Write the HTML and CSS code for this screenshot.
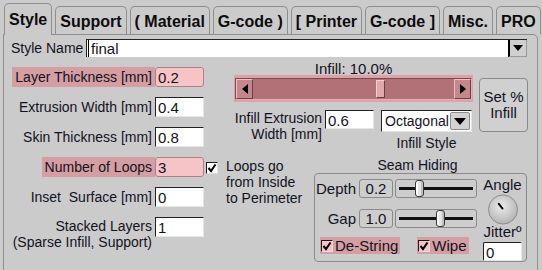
FILE: index.html
```html
<!DOCTYPE html>
<html lang="en">
<head>
    <meta charset="UTF-8">
    <link rel="stylesheet" href="styles.css">
</head>
<body>
    <div class="tabs">
        <div class="tab active">Style</div>
        <div class="tab">Support</div>
        <div class="tab">( Material</div>
        <div class="tab">G-code )</div>
        <div class="tab">[ Printer</div>
        <div class="tab">G-code ]</div>
        <div class="tab">Misc.</div>
        <div class="tab">PRO</div>
    </div>

    <div class="panel">
        <div class="name-row">
            <span class="name-label">Style Name</span>
            <div class="combo">
                <span class="combo-text">final</span>
                <span class="combo-btn"><svg width="10" height="6" viewBox="0 0 10 6"><path d="M0 0h10L5 6z" fill="#000"/></svg></span>
            </div>
        </div>

        <div class="main">
            <div class="fields">
                <div class="field">
                    <span class="lbl hl">Layer Thickness [mm]</span>
                    <span class="box pink">0.2</span>
                </div>
                <div class="field">
                    <span class="lbl">Extrusion Width [mm]</span>
                    <span class="box">0.4</span>
                </div>
                <div class="field">
                    <span class="lbl">Skin Thickness [mm]</span>
                    <span class="box">0.8</span>
                </div>
                <div class="field">
                    <span class="lbl hl">Number of Loops</span>
                    <span class="box pink">3</span>
                </div>
                <div class="field">
                    <span class="lbl">Inset&nbsp; Surface [mm]</span>
                    <span class="box">0</span>
                </div>
                <div class="field two-line">
                    <span class="lbl">Stacked Layers<br>(Sparse Infill, Support)</span>
                    <span class="box">1</span>
                </div>
            </div>

            <div class="right">
                <div class="infill-area">
                    <div class="infill">
                        <div class="infill-title">Infill: 10.0%</div>
                        <div class="scroll-wrap">
                            <div class="scroll">
                                <span class="arrow-btn"><svg width="6" height="10" viewBox="0 0 6 10"><path d="M6 0v10L0 5z" fill="#000"/></svg></span>
                                <span class="track" style="width: 123px"></span>
                                <span class="thumb"></span>
                                <span class="track fill"></span>
                                <span class="arrow-btn"><svg width="6" height="10" viewBox="0 0 6 10"><path d="M0 0v10l6-5z" fill="#000"/></svg></span>
                            </div>
                        </div>
                        <div class="infill-row">
                            <span class="infill-lbl">Infill Extrusion<br>Width [mm]</span>
                            <span class="box">0.6</span>
                            <div class="style-pick">
                                <div class="drop">
                                    <span class="drop-text">Octagonal</span>
                                    <span class="drop-btn"><svg width="12" height="7" viewBox="0 0 12 7"><path d="M0 0h12L6 7z" fill="#000"/></svg></span>
                                </div>
                                <div class="drop-caption">Infill Style</div>
                            </div>
                        </div>
                    </div>
                    <div class="set-btn">Set %<br>Infill</div>
                </div>

                <div class="lower">
                    <div class="loops-note">
                        <span class="check"><svg width="10" height="10" viewBox="0 0 10 10"><path d="M1.5 5l2.5 3 4.5-6.5" fill="none" stroke="#000" stroke-width="2"/></svg></span>
                        <span class="note-text">Loops go<br>from Inside<br>to Perimeter</span>
                    </div>

                    <div class="seam">
                        <div class="seam-title">Seam Hiding</div>
                        <div class="seam-box">
                            <div class="seam-left">
                                <div class="seam-row">
                                    <span class="seam-lbl">Depth</span>
                                    <span class="val">0.2</span>
                                    <div class="slider"><div class="slider-track"><span class="knob" style="left: 16px"></span></div></div>
                                </div>
                                <div class="seam-row">
                                    <span class="seam-lbl">Gap</span>
                                    <span class="val">1.0</span>
                                    <div class="slider"><div class="slider-track"><span class="knob" style="left: 37px"></span></div></div>
                                </div>
                                <div class="seam-checks">
                                    <span class="chk-hl"><span class="check pink-check"><svg width="10" height="10" viewBox="0 0 10 10"><path d="M1.5 5l2.5 3 4.5-6.5" fill="none" stroke="#000" stroke-width="2"/></svg></span>De-String</span>
                                    <span class="chk-hl wipe"><span class="check pink-check"><svg width="10" height="10" viewBox="0 0 10 10"><path d="M1.5 5l2.5 3 4.5-6.5" fill="none" stroke="#000" stroke-width="2"/></svg></span>Wipe</span>
                                </div>
                            </div>
                            <div class="seam-right">
                                <span class="angle-lbl">Angle</span>
                                <svg class="dial" width="32" height="32" viewBox="0 0 32 32">
                                    <defs>
                                        <radialGradient id="dialFill" cx="45%" cy="40%" r="60%">
                                            <stop offset="0" stop-color="#ececec"/>
                                            <stop offset="1" stop-color="#b4b4b4"/>
                                        </radialGradient>
                                    </defs>
                                    <circle cx="16" cy="16" r="15" fill="url(#dialFill)" stroke="#8a8a8a"/>
                                    <path d="M11.5 10l4 5" stroke="#000" stroke-width="2" stroke-linecap="round"/>
                                </svg>
                                <span class="jitter-lbl">Jitterº</span>
                                <span class="box jitter">0</span>
                            </div>
                        </div>
                    </div>
                </div>
            </div>
        </div>
    </div>
</body>
</html>
```

FILE: styles.css
```css
body {
    margin: 0;
    width: 542px;
    height: 270px;
    overflow: hidden;
    background: #cbcbcb;
    font-family: "Liberation Sans", Arial, sans-serif;
    font-size: 14px;
    color: #12121e;
}

/* tab strip */
.tabs {
    display: flex;
    align-items: flex-end;
    gap: 3px;
    height: 31px;
    padding: 3px 0 0 4px;
}
.tab {
    height: 27px;
    line-height: 29px;
    padding: 0 4px;
    border: 1px solid #8e8e8e;
    border-bottom: none;
    border-radius: 5px 5px 0 0;
    font-size: 16px;
    font-weight: bold;
    color: #0c0c0c;
}
.tab.active {
    position: relative;
    z-index: 1;
    height: 31px;
    line-height: 31px;
    margin-bottom: -1px;
    background: #cbcbcb;
}

.panel {
    height: 240px;
    margin: 0 4px 0 3px;
    padding-top: 4px;
    border: 1px solid #8e8e8e;
    border-radius: 0 5px 0 0;
    box-sizing: border-box;
}

/* style name */
.name-row {
    display: flex;
    align-items: center;
    height: 18px;
    padding-left: 7px;
}
.name-label {
    width: 75px;
}
.combo {
    display: flex;
    width: 441px;
    height: 18px;
    background: #fff;
    border-top: 1px solid #222;
    border-left: 1px solid #222;
    box-sizing: border-box;
}
.combo-text {
    flex: 1;
    padding-left: 2px;
    line-height: 17px;
    font-size: 15px;
    border-left: 1px solid #000;
    margin-left: 1px;
}
.combo-btn {
    display: flex;
    align-items: center;
    justify-content: center;
    width: 16px;
    background: #cfcfcf;
    border-left: 2px solid #000;
    border-right: 1px solid #9a9a9a;
    border-bottom: 1px solid #9a9a9a;
}

.main {
    display: flex;
    margin-top: 5px;
}

/* left column of fields */
.fields {
    width: 200px;
    padding-top: 5px;
}
.field {
    display: flex;
    justify-content: flex-end;
    align-items: center;
    height: 20px;
    margin-bottom: 10px;
}
.field.two-line {
    align-items: flex-start;
}
.lbl {
    padding: 0 3px;
    line-height: 20px;
    text-align: right;
    white-space: nowrap;
}
.two-line .lbl {
    line-height: 16px;
    padding-top: 1px;
}
.lbl.hl {
    background: #d49ea2;
}
.box {
    width: 49px;
    height: 20px;
    padding-left: 2px;
    line-height: 19px;
    font-size: 15px;
    background: #fff;
    border: 1px solid #e6e6e6;
    border-top-color: #202020;
    border-left-color: #202020;
    box-sizing: border-box;
}
.box.pink {
    background: #f6c3c7;
    border: 1px solid #a88486;
    border-radius: 3px;
}

/* right side */
.right {
    flex: 1;
}
.infill-area {
    display: flex;
    align-items: flex-start;
    height: 96px;
    padding-left: 30px;
}
.infill {
    width: 239px;
}
.infill-title {
    height: 13px;
    line-height: 13px;
    font-size: 15px;
    text-align: center;
}
.scroll-wrap {
    padding: 3px 1px 2px;
    background: #dca2a6;
}
.scroll {
    display: flex;
    height: 20px;
    background: #b07276;
    border: 1px solid;
    border-color: #7c4a4d #e2b1b4 #e2b1b4 #7c4a4d;
}
.arrow-btn {
    display: flex;
    align-items: center;
    justify-content: center;
    width: 15px;
    background: #c4878b;
    border: 1px solid;
    border-color: #edc1c4 #6e3e41 #6e3e41 #edc1c4;
}
.track {
    flex: none;
}
.track.fill {
    flex: 1;
}
.thumb {
    width: 7px;
    margin: 1px 0;
    background: #e1a9ac;
    border: 1px solid;
    border-color: #f5d2d4 #6e3e41 #6e3e41 #f5d2d4;
}
.infill-row {
    display: flex;
    align-items: flex-start;
    margin-top: 8px;
}
.infill-lbl {
    width: 88px;
    line-height: 16px;
    text-align: right;
    white-space: nowrap;
}
.infill-row .box {
    height: 19px;
    margin-left: 3px;
}
.style-pick {
    margin-left: 7px;
    text-align: center;
}
.drop {
    display: flex;
    width: 91px;
    height: 22px;
    background: #fff;
    border: 1px solid #e6e6e6;
    border-top-color: #202020;
    border-left-color: #202020;
    box-sizing: border-box;
}
.drop-text {
    flex: 1;
    padding-left: 3px;
    line-height: 21px;
    font-size: 14px;
    text-align: left;
}
.drop-btn {
    display: flex;
    align-items: center;
    justify-content: center;
    width: 19px;
    margin: 1px;
    background: #d2d2d2;
    border: 1px solid #8c8c8c;
    border-radius: 2px;
}
.drop-caption {
    margin-top: 4px;
    line-height: 14px;
}
.set-btn {
    width: 49px;
    height: 54px;
    margin: 16px 0 0 6px;
    padding-top: 10px;
    box-sizing: border-box;
    line-height: 16px;
    font-size: 15px;
    text-align: center;
    background: #d0d0d0;
    border: 1px solid #8a8a8a;
    border-radius: 4px;
}

/* lower right */
.lower {
    display: flex;
}
.loops-note {
    display: flex;
    width: 110px;
}
.check {
    display: flex;
    align-items: center;
    justify-content: center;
    width: 12px;
    height: 12px;
    background: #fff;
    border: 1px solid #e0e0e0;
    border-top-color: #1a1a1a;
    border-left-color: #1a1a1a;
    box-sizing: border-box;
}
.loops-note .check {
    margin: 4px 0 0 2px;
}
.note-text {
    margin-left: 8px;
    line-height: 16px;
}

.seam {
    width: 213px;
}
.seam-title {
    height: 15px;
    line-height: 14px;
    text-align: center;
    padding-right: 6px;
}
.seam-box {
    display: flex;
    height: 89px;
    border: 1px solid #8a8a8a;
    border-radius: 4px;
    box-sizing: border-box;
}
.seam-left {
    width: 163px;
    padding: 5px 0 0 1px;
}
.seam-row {
    display: flex;
    align-items: center;
    height: 19px;
    margin-bottom: 11px;
}
.seam-lbl {
    width: 40px;
    text-align: right;
    font-size: 15px;
}
.val {
    width: 34px;
    height: 19px;
    margin-left: 3px;
    line-height: 18px;
    text-align: center;
    font-size: 15px;
    background: #cdcdcd;
    border: 1px solid #8a8a8a;
    border-radius: 3px;
    box-sizing: border-box;
}
.slider {
    display: flex;
    align-items: center;
    width: 82px;
    height: 19px;
    margin-left: 2px;
    padding: 0 3px;
    background: #cdcdcd;
    border: 1px solid #8a8a8a;
    border-radius: 3px;
    box-sizing: border-box;
}
.slider-track {
    position: relative;
    flex: 1;
    height: 3px;
    background: #111;
}
.knob {
    position: absolute;
    top: -7px;
    width: 9px;
    height: 17px;
    background: #e4e4e4;
    border: 1px solid #3a3a3a;
    border-radius: 3px;
    box-sizing: border-box;
    box-shadow: inset 2px 0 0 #ffffff, inset -2px 0 0 #bdbdbd;
}
.seam-checks {
    display: flex;
    margin-top: -2px;
    padding-left: 4px;
}
.chk-hl {
    display: flex;
    align-items: center;
    gap: 2px;
    height: 17px;
    padding: 0 2px 0 1px;
    background: #d49ea2;
    font-size: 15px;
}
.chk-hl.wipe {
    margin-left: 17px;
}
.pink-check {
    background: #f6c3c7;
}
.seam-right {
    display: flex;
    flex-direction: column;
    align-items: center;
    width: 47px;
    padding-top: 4px;
}
.angle-lbl,
.jitter-lbl {
    line-height: 14px;
    font-size: 15px;
}
.dial {
    margin-top: 2px;
}
.box.jitter {
    width: 39px;
    height: 19px;
    margin-top: 3px;
    border-radius: 2px;
}
```
